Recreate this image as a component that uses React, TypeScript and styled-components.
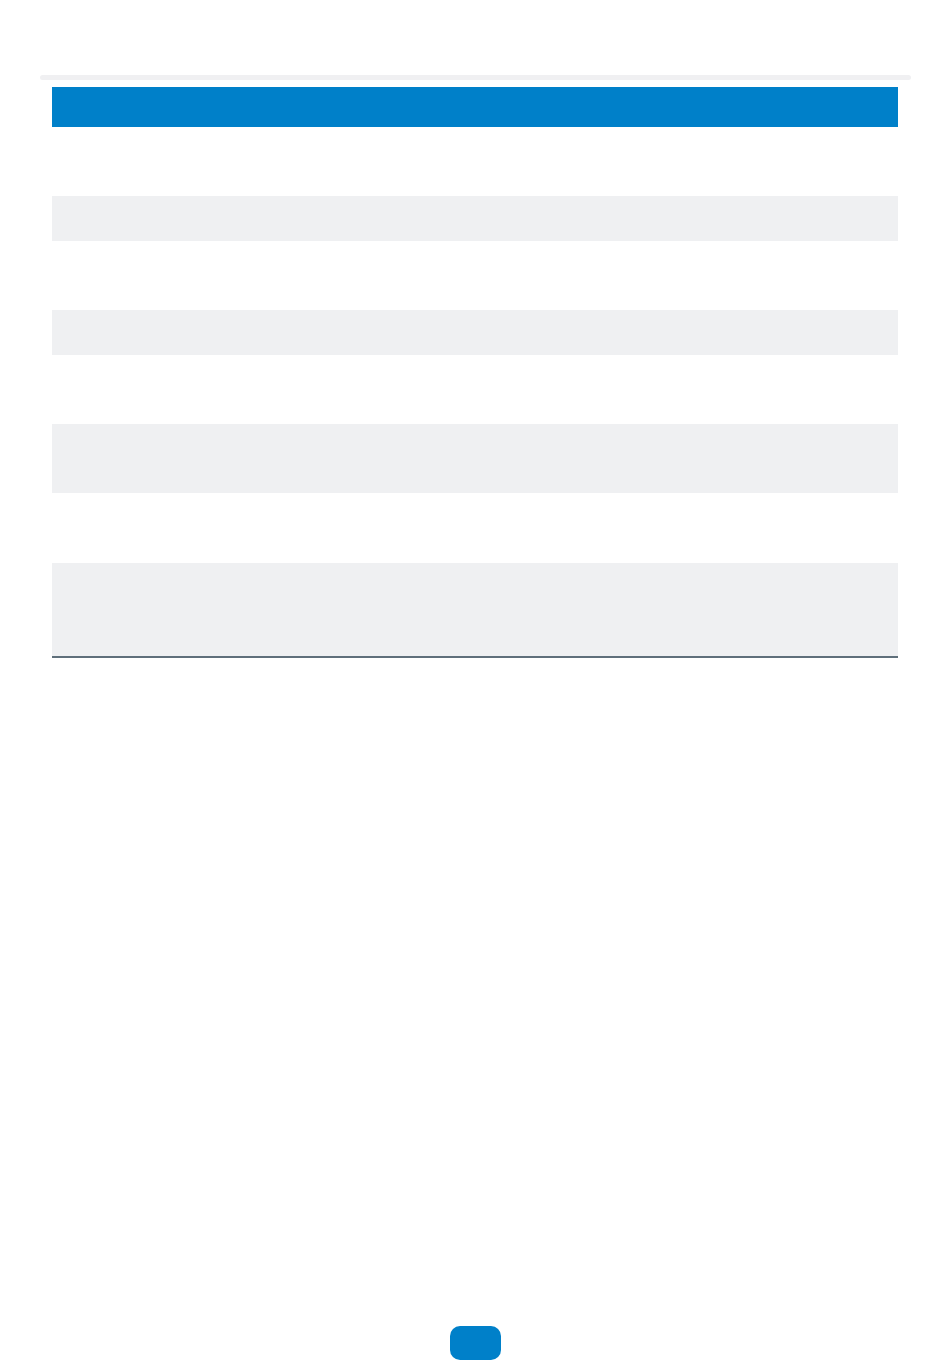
import React from 'react'
import styled, { createGlobalStyle } from "styled-components";

const rows = [
    { height: 69, shaded: false },
    { height: 45, shaded: true },
    { height: 69, shaded: false },
    { height: 45, shaded: true },
    { height: 69, shaded: false },
    { height: 69, shaded: true },
    { height: 70, shaded: false },
    { height: 93, shaded: true },
];

export default function App(){
    return (
        <>
            <GlobalStyle />
            <Page>
                <TopRule />
                <Table>
                    <HeadRow />
                    {rows.map((r, i) => (
                        <Row key={i} $height={r.height} $shaded={r.shaded} />
                    ))}
                </Table>
                <Footer>
                    <PageBadge />
                </Footer>
            </Page>
        </>
    );
}

const GlobalStyle = createGlobalStyle`
    html, body {
        margin:0;
        padding:0;
        background:#ffffff;
        font-family:"Liberation Sans", Arial, sans-serif;
    }
`;

const Page = styled.div`
    display:flex;
    flex-direction:column;
    width:950px;
    height:1369px;
    padding-top:75px;
    box-sizing:border-box;
`;

const TopRule = styled.div`
    height:5px;
    margin:0 39px 0 40px;
    background:#f0f0f2;
    border-radius:3px;
`;

const Table = styled.div`
    display:flex;
    flex-direction:column;
    margin:7px 52px 0 52px;
    border-bottom:2px solid #5f6f7b;
`;

const HeadRow = styled.div`
    height:40px;
    background:#0080c9;
`;

const Row = styled.div<{ $height: number; $shaded: boolean }>`
    height:${p => p.$height}px;
    background:${p => (p.$shaded ? "#eff0f2" : "#ffffff")};
`;

const Footer = styled.div`
    display:flex;
    justify-content:center;
    margin-top:auto;
    padding-bottom:9px;
`;

const PageBadge = styled.div`
    width:51px;
    height:34px;
    border-radius:10px;
    background:#0080c9;
`;
